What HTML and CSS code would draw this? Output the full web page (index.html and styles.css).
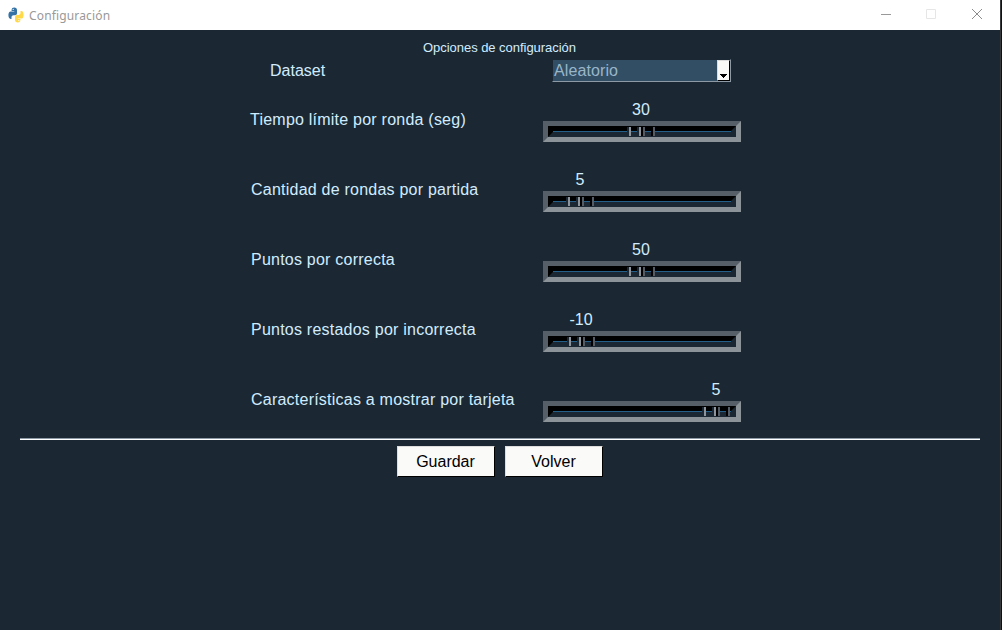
FILE: index.html
```html
<!DOCTYPE html>
<html lang="es">
<head>
<meta charset="utf-8">
<title>Configuración</title>
<link rel="stylesheet" href="styles.css">
</head>
<body>
<svg class="defs" width="0" height="0">
  <symbol id="handle" viewBox="0 0 28 9">
    <path fill="#1b2834" d="M0 0h2v9H0zM10 0h2v9h-2z"/>
    <path fill="#000" d="M14 0h2v9h-2zM24 0h2v9h-2z"/>
    <path fill="#8d949c" d="M2 0h2v9H2zM12 0h2v9h-2z"/>
    <path fill="#545d66" d="M16 0h2v9h-2zM26 0h2v9h-2z"/>
  </symbol>
</svg>
<div class="window">
  <header class="titlebar">
    <svg class="logo" width="16" height="16" viewBox="0 0 16 16">
      <path fill="#3572a5" d="M3.600 3.200C3.600 1.300 4.600.6 6.300.6s2.700.8 2.700 2.600v3c0 1.300-.8 2-2 2H5.700c-1.400 0-2.200.8-2.200 2.200v1.600H2.700C1.200 12 .4 10.300.4 8.100s.8-3.700 2.400-3.700h3.500V4H3.600z"/>
      <path fill="#ffd94a" d="M12.400 12.800c0 1.900-1 2.600-2.700 2.600S7 14.600 7 12.800V9.900c0-1.300.8-2 2-2h1.300c1.400 0 2.200-.9 2.200-2.200V4h.8c1.500 0 2.300 1.700 2.300 3.900 0 2.100-.8 3.700-2.400 3.700H9.700v.4h2.700z"/>
      <circle cx="5.200" cy="2.400" r=".6" fill="#fff"/>
      <circle cx="10.800" cy="13.600" r=".6" fill="#fff"/>
    </svg>
    <span class="caption">Configuración</span>
    <svg class="controls" width="104" height="12" viewBox="0 0 104 12" fill="none">
      <path stroke="#999" d="M0 5.500h10"/>
      <path stroke="#e6e6e6" d="M45.500.5h9v9h-9z"/>
      <path stroke="#8c8c8c" d="M91 0l10 10M101 0L91 10"/>
    </svg>
  </header>
  <main class="content">
    <h1 class="heading">Opciones de configuración</h1>
    <div class="dataset">
      <span class="dataset-label">Dataset</span>
      <div class="combo"><span class="combo-text">Aleatorio</span><span class="combo-button"><svg width="7" height="4" viewBox="0 0 7 4"><path d="M0 0h7v1H6v1H5v1H4v1H3V3H2V2H1V1H0z"/></svg></span></div>
    </div>
    <div class="options">
      <div class="option"><span class="label">Tiempo límite por ronda (seg)</span><div class="scale"><span class="value" style="margin-left:98px">30</span><div class="frame"><div class="trough"><svg class="handle" style="margin-left:74px"><use href="#handle"/></svg></div></div></div></div>
      <div class="option"><span class="label nudge">Cantidad de rondas por partida</span><div class="scale"><span class="value" style="margin-left:37px">5</span><div class="frame"><div class="trough"><svg class="handle" style="margin-left:13px"><use href="#handle"/></svg></div></div></div></div>
      <div class="option"><span class="label nudge">Puntos por correcta</span><div class="scale"><span class="value" style="margin-left:98px">50</span><div class="frame"><div class="trough"><svg class="handle" style="margin-left:74px"><use href="#handle"/></svg></div></div></div></div>
      <div class="option"><span class="label nudge">Puntos restados por incorrecta</span><div class="scale"><span class="value" style="margin-left:38px">-10</span><div class="frame"><div class="trough"><svg class="handle" style="margin-left:14px"><use href="#handle"/></svg></div></div></div></div>
      <div class="option"><span class="label nudge">Características a mostrar por tarjeta</span><div class="scale"><span class="value" style="margin-left:173px">5</span><div class="frame"><div class="trough"><svg class="handle" style="margin-left:149px"><use href="#handle"/></svg></div></div></div></div>
    </div>
    <div class="separator"></div>
    <div class="actions"><button class="button">Guardar</button><button class="button">Volver</button></div>
  </main>
</div>
</body>
</html>
```
FILE: styles.css
```css
* { box-sizing: border-box; }
body { margin: 0; background: #111; overflow: hidden; font: 16px/20px "Liberation Sans", Arial, sans-serif; }
.defs { position: absolute; }
.window { width: 1001px; height: 630px; background: #1b2834; border-right: 1px solid #38393b; display: flex; flex-direction: column; }
.titlebar { height: 30px; background: #fff; display: flex; align-items: flex-start; padding: 7px 15px 0 8px; }
.caption { margin-left: 5px; flex: 1; font: 12px/18px "Noto Sans", sans-serif; letter-spacing: .15px; color: #999; }
.controls { margin: 2px 0 0; }
.content { color: #d1ecff; display: flex; flex-direction: column; }
.heading { margin: 10px 0 0; padding-left: 423px; font-size: 13px; line-height: 16px; font-weight: normal; letter-spacing: -.04px; white-space: nowrap; }
.dataset { display: flex; padding-left: 270px; margin-top: 3px; height: 23px; }
.dataset-label { width: 282px; line-height: 23px; }
.combo { width: 179px; height: 23px; display: flex; background: #324e64; border: 1px solid; border-color: #1b2834 #8d9aa6 #8d9aa6 #1b2834; color: #99b6c9; }
.combo-text { flex: 1; padding-left: 1px; line-height: 21px; letter-spacing: .1px; }
.combo-button { width: 13px; height: 21px; background: #fafaf8; border: 1px solid; border-color: #ddd #000 #000 #ddd; display: flex; justify-content: center; align-items: flex-end; padding-bottom: 2px; }
.options { padding-top: 17px; }
.option { height: 70px; display: flex; padding-left: 250px; }
.label { width: 293px; padding-top: 11px; letter-spacing: .23px; }
.nudge { padding-left: 1px; }
.scale { width: 198px; }
.value { width: 0; height: 22px; padding-top: 1px; display: flex; justify-content: center; white-space: nowrap; }
.frame { height: 21px; border: 5px solid; border-color: #565f67 #8c9399 #8c9399 #565f67; }
.trough { height: 11px; border: 5px solid; border-color: #000 #1b2834 #1b2834 #000; background: #235f88; }
.handle { display: block; width: 28px; height: 9px; position: relative; top: -4px; }
.separator { margin: -11px 20px 0; height: 2px; background: #fff; border-top: 1px solid #8d9aa6; }
.actions { display: flex; gap: 10px; padding: 6px 0 0 397px; }
.button { width: 98px; height: 31px; padding: 0 1px 0 0; background: #fafaf8; border: 1px solid; border-color: #ddd #000 #000 #ddd; font: 16px/20px "Liberation Sans", Arial, sans-serif; color: #000; }
```
